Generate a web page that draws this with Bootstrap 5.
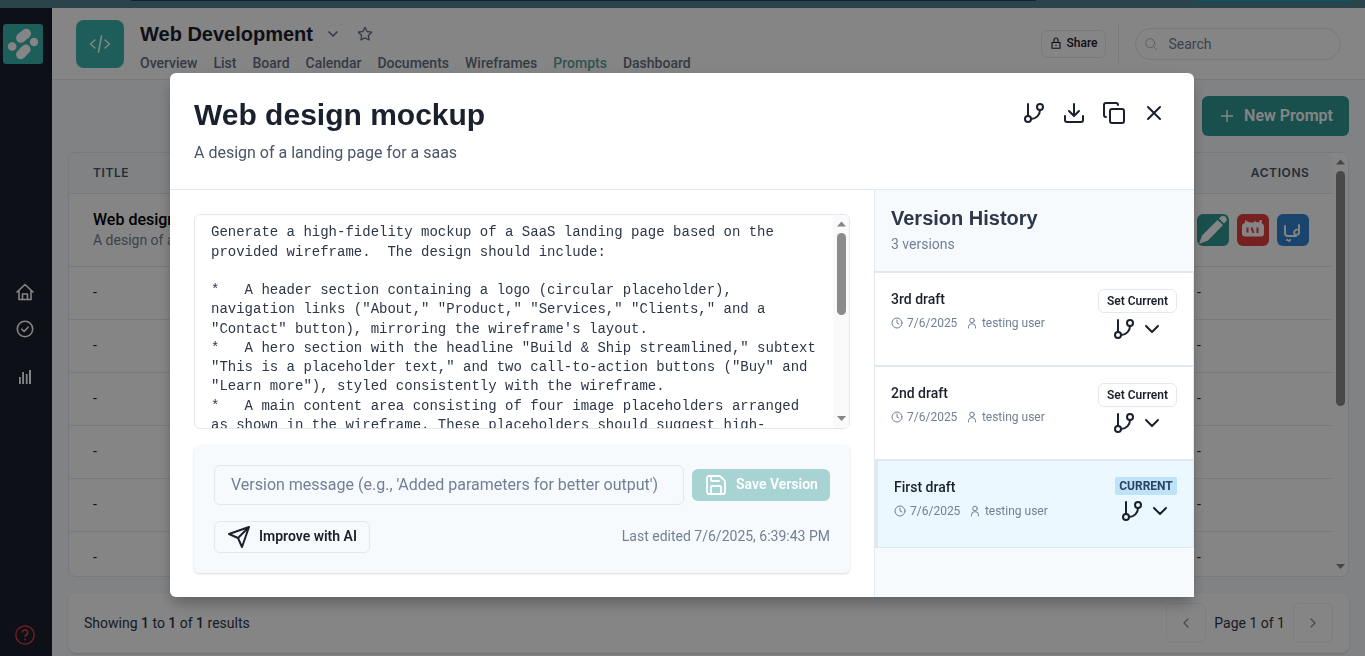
<!DOCTYPE html>
<html lang="en">
<head>
<meta charset="utf-8">
<meta name="viewport" content="width=device-width, initial-scale=1">
<title>Web Development – Prompts</title>
<link href="https://cdn.jsdelivr.net/npm/bootstrap@5.3.0/dist/css/bootstrap.min.css" rel="stylesheet">
<style>
  :root { --g50:#f7fafc; --g100:#edf2f7; --g200:#e2e8f0; --g500:#718096; --g600:#4a5568; --g700:#2d3748; --g800:#1a202c; --teal:#319795; }
  body { font-family: Roboto, sans-serif; font-size: 16px; line-height: 1.5; color: var(--g800); background: var(--g50); height: 656px; overflow: hidden; }
  h1, h2, .brand-head { font-family: "Liberation Sans", Arial, sans-serif; font-weight: 700; margin: 0; }
  svg { display: block; flex: none; }
  .ico { fill: none; stroke: currentColor; stroke-width: 2; stroke-linecap: round; stroke-linejoin: round; }
  .fw-med { font-weight: 500; }

  .top-strip { height: 8px; background: #50828f; padding-left: 131px; }
  .top-strip .seg-dark { width: 905px; height: 1px; background: #204a50; }
  .top-strip .seg-cyan { width: 152px; height: 1px; margin-left: 162px; background: #00b0c4; }
  .shell { height: 648px; }
  .side { width: 52px; background: var(--g800); color: #fff; padding-top: 16px; padding-bottom: 11px; }
  .side .logo { margin-left: 3px; }
  .side .nav-ico { margin-left: 16px; }

  .proj-head { height: 72px; background: #fff; border-bottom: 1px solid var(--g200); padding: 12px 24px; }
  .proj-tile { width: 48px; height: 48px; border-radius: 8px; background: #38b2ac; color: #fff; }
  .proj-name { font-size: 20px; line-height: 28px; color: var(--g800); }
  .tabs { gap: 16px; font-size: 14px; line-height: 21px; color: #667085; margin-top: 5px; }
  .tabs a { color: inherit; text-decoration: none; }
  .tabs a.on { color: #5c9f9a; }
  .share { width: 65px; height: 28px; border: 1px solid var(--g200); border-radius: 6px; font-size: 12px; gap: 6px; margin-top: 10px; padding: 0 0 2px 1px; }
  .head-rule { width: 1px; height: 40px; background: var(--g200); margin: 3px 16px 0 12px; }
  .search { width: 206px; height: 32px; border: 1px solid var(--g200); border-radius: 16px; color: var(--g500); font-size: 14px; padding-left: 9px; gap: 11.5px; margin-top: 8px; }
  .new-btn { width: 147px; height: 40px; border-radius: 6px; background: var(--teal); color: #fff; font-weight: 600; font-size: 16px; gap: 8px; }

  .grid-card { height: 425px; border: 1px solid var(--g200); border-radius: 8px; overflow: hidden; background: #fff; }
  .grid-row { height: 53px; border-bottom: 1px solid var(--g200); padding: 0 23px 2px 24px; font-size: 14px; }
  .grid-row.heading { height: 41px; background: var(--g50); font-size: 12px; font-family: Inter, sans-serif; font-weight: 600; letter-spacing: .6px; color: var(--g600); padding: 0 22.5px 0 24px; }
  .grid-row.first { height: 73px; padding-bottom: 0; }
  .grid-row .lead-title { font-size: 16px; font-weight: 500; color: #000; }
  .grid-row .acts { width: 112px; gap: 8px; }
  .act { width: 32px; height: 32px; border-radius: 6px; color: #fff; }
  .track { width: 16px; padding: 4px 0; background: #fff; color: #858585; }
  .track .thumb { width: 9px; border-radius: 5px; background: #8b8b8b; }
  .pager { height: 60px; background: #fff; border-radius: 8px; margin-top: 16px; padding: 0 16px; font-size: 14px; color: var(--g700); box-shadow: 0 1px 3px rgba(0,0,0,.1), 0 1px 2px rgba(0,0,0,.06); }
  .page-btn { width: 40px; height: 40px; border: 1px solid var(--g100); border-radius: 6px; color: #8a9099; }

  .shade { position: fixed; inset: 0; background: rgba(0,0,0,.48); padding: 73px 0 0 170px; }
  .sheet { width: 1024px; height: 524px; background: #fff; border-radius: 6px 6px 0 6px; overflow: hidden; }
  .shade-drop { width: 1024px; border-radius: 6px; box-shadow: 0 10px 15px -3px rgba(0,0,0,.2), 0 4px 16px -2px rgba(0,0,0,.15); }
  .sheet-head { height: 117px; border-bottom: 1px solid var(--g200); padding: 24px 28px 0 24px; }
  .sheet-head h1 { font-size: 30px; line-height: 36px; }
  .sheet-head p { font-size: 16px; line-height: 24px; margin: 8px 0 0; color: var(--g600); }
  .sheet-tools { gap: 16px; margin-top: 4px; }
  .editor { width: 704px; padding: 24px; }
  .prompt-box { width: 656px; height: 215px; border: 1px solid var(--g200); border-radius: 6px; overflow: hidden; }
  .prompt-text { font-family: "Liberation Mono", "Courier New", monospace; font-size: 14px; line-height: 19.25px; white-space: pre; color: var(--g700); padding: 8.300px 0 0 16px; margin: 0; overflow: hidden; }
  .prompt-box .track { background: #fafafa; }
  .save-panel { width: 656px; height: 128px; margin-top: 16px; padding: 20px; background: var(--g50); border-radius: 6px; box-shadow: 0 1px 3px rgba(0,0,0,.1), 0 1px 2px rgba(0,0,0,.06); }
  .msg { width: 470px; height: 40px; border: 1px solid var(--g200); border-radius: 6px; padding: 0 16px 2px; font-size: 16px; background: transparent; color: var(--g700); }
  .msg::placeholder { color: var(--g500); opacity: 1; }
  .save-btn { width: 138px; height: 32px; border-radius: 6px; background: #a8d3d3; color: #fff; font-size: 14px; font-weight: 600; gap: 8px; }
  .ai-btn { width: 156px; height: 32px; border: 1px solid var(--g200); border-radius: 6px; font-size: 14px; font-weight: 600; gap: 8px; }
  .save-btn span, .ai-btn span, .edited { padding-bottom: 2px; }
  .edited { font-size: 14px; color: var(--g500); }

  .history { width: 320px; border-left: 1px solid var(--g200); background: var(--g50); }
  .hist-head { height: 82px; border-bottom: 1px solid var(--g200); padding: 16px; }
  .hist-head h2 { font-size: 20px; line-height: 24px; color: var(--g700); }
  .hist-head p { font-size: 14px; line-height: 21px; margin: 4px 0 0; color: var(--g500); }
  .ver { height: 94px; background: #fff; border: 1px solid var(--g200); border-left: 0; padding: 16px; }
  .ver.current { height: 88px; background: #ebf8ff; border-left: 3px solid var(--g200); }
  .ver .name { font-size: 14px; line-height: 21px; font-weight: 500; }
  .ver .meta { font-size: 12px; line-height: 18px; margin-top: 4px; color: var(--g500); }
  .ver .meta .date { margin: 0 8.500px 0 4px; }
  .set-btn { width: 79px; height: 24px; border: 1px solid var(--g200); border-radius: 6px; font-size: 12px; font-weight: 600; }
  .cur-tag { width: 62px; height: 18px; border-radius: 2px; background: #bee3f8; color: #2a4365; font-size: 12px; font-weight: 700; }
</style>
</head>
<body>
<svg width="0" height="0" class="position-absolute">
  <symbol id="branch" viewBox="0 0 24 24"><path d="M6 3v12M18 9a9 9 0 0 1-9 9"/><circle cx="18" cy="6" r="3"/><circle cx="6" cy="18" r="3"/></symbol>
  <symbol id="down" viewBox="0 0 24 24"><path d="M6 9l6 6 6-6"/></symbol>
  <symbol id="clock" viewBox="0 0 24 24"><circle cx="12" cy="12" r="10"/><path d="M12 6v6l4 2"/></symbol>
  <symbol id="person" viewBox="0 0 24 24"><circle cx="12" cy="7" r="4.6"/><path d="M5 22v-2.500a6 6 0 0 1 6-6h2a6 6 0 0 1 6 6V22"/></symbol>
</svg>

<div class="top-strip d-flex"><div class="seg-dark"></div><div class="seg-cyan"></div></div>
<div class="shell d-flex">
  <nav class="side d-flex flex-column">
    <svg class="logo" width="40" height="40" viewBox="0 0 40 40"><rect width="40" height="40" rx="3" fill="#38b2ac"/><g stroke="#fff" stroke-width="9.500" stroke-linecap="round"><path d="M17.800 14l5.500-4.500M17.800 30.500l5-5.200"/></g><circle cx="9.200" cy="22.500" r="4.300" fill="#fff"/><circle cx="31" cy="18" r="4.200" fill="#fff"/></svg>
    <svg class="nav-ico ico" style="margin-top:219px;stroke-width:1.600" width="18" height="18" viewBox="0 0 18 18"><path d="M1 9l8-7.500L17 9M3 7.500V16.500h12V7.500M6.500 16.500v-5.500h5v5.500"/></svg>
    <svg class="nav-ico ico" style="margin-top:19px;stroke-width:1.600" width="18" height="18" viewBox="0 0 18 18"><circle cx="9" cy="9" r="7.700"/><path d="M5.800 9.200l2.300 2.300 4-4.300"/></svg>
    <svg class="nav-ico" style="margin-top:31px" width="18" height="16" viewBox="0 0 18 16" fill="#fff"><path d="M3 8h1.800v7H3zM6.200 3H8v12H6.200zM9.800 5h1.800v10H9.800zM13 1h2v14h-2z"/></svg>
    <svg class="mt-auto" style="margin-left:15px" width="20" height="20" viewBox="0 0 20 20" fill="none" stroke="#e53e3e" stroke-width="1.300"><circle cx="10" cy="10" r="9.200"/><path d="M7.300 7.600a2.700 2.700 0 1 1 3.900 2.400c-.9.500-1.200.9-1.200 2M10 13.700v1.600" stroke-width="1.500"/></svg>
  </nav>

  <div class="flex-grow-1">
    <header class="proj-head d-flex">
      <div class="proj-tile d-flex align-items-center justify-content-center"><svg class="ico" width="22" height="20" viewBox="0 0 22 20" style="stroke-width:1.600"><path d="M6 6L1.500 10 6 14M16 6l4.500 4-4.500 4M12.500 2l-3 16"/></svg></div>
      <div style="margin-left:16px">
        <div class="d-flex align-items-center">
          <div class="brand-head proj-name">Web Development</div>
          <svg class="ico" style="margin-left:12px;color:#667085" width="16" height="16" viewBox="0 0 24 24"><path d="M6 9l6 6 6-6" stroke-width="2.500"/></svg>
          <svg class="ico" style="margin-left:16px;color:#667085" width="16" height="16" viewBox="0 0 24 24"><path d="M12 2l3.100 6.300 6.900 1-5 4.900 1.200 6.800-6.200-3.200L5.800 21 7 14.200 2 9.300l6.900-1z"/></svg>
        </div>
        <div class="tabs d-flex fw-med"><a>Overview</a><a>List</a><a>Board</a><a>Calendar</a><a>Documents</a><a>Wireframes</a><a class="on">Prompts</a><a>Dashboard</a></div>
      </div>
      <div class="share ms-auto d-flex align-items-center justify-content-center fw-med"><svg width="10" height="12" viewBox="0 0 10 12" fill="none" stroke="currentColor" stroke-width="1.100"><path d="M1 5.500h8v5.800H1zM3 5.500V3a2 2 0 0 1 4 0v2.500M5 7.800v1.200"/></svg>Share</div>
      <div class="head-rule"></div>
      <div class="search d-flex align-items-center"><svg class="ico" width="12" height="12" viewBox="0 0 12 12" style="stroke-width:1;opacity:.55"><circle cx="5.200" cy="5.200" r="4.500"/><path d="M8.500 8.500l3 3"/></svg>Search</div>
    </header>

    <main class="px-3">
      <div class="d-flex justify-content-end pt-3"><div class="new-btn d-flex align-items-center justify-content-center"><svg width="18" height="18" viewBox="0 0 18 18" stroke="#fff" stroke-width="1.400"><path d="M9 3v12M3 9h12"/></svg>New Prompt</div></div>
      <div class="grid-card d-flex mt-3">
        <div class="flex-grow-1">
          <div class="grid-row heading d-flex align-items-center justify-content-between"><span>TITLE</span><span>ACTIONS</span></div>
          <div class="grid-row first d-flex align-items-center justify-content-between">
            <div style="line-height:21px"><div class="lead-title">Web design mockup</div><div style="color:#718096">A design of a landing page for a saas</div></div>
            <div class="acts d-flex">
              <div class="act" style="background:#319795"><svg width="32" height="32" viewBox="0 0 32 32" fill="#fff"><path d="M2 30l3-8.500L20.500 6l5.500 5L11 26.500zM22 4.500l2-2q2-1.500 4 0l1 1q1.500 2 0 4L27 9.500z"/></svg></div>
              <div class="act" style="background:#e53e3e"><svg width="32" height="32" viewBox="0 0 32 32"><path d="M5 12q0-2.500 3-3V6l2 1.200 3 1.300h4l1-2 1 1.500 3 .5 1-2.500h2l-.5 3q2.500 1 2.500 3.500v7q0 3-3 3H8q-3 0-3-3z" fill="#fff"/><path d="M10.500 13.500v5M14.500 13.500l2 5.500M20.500 13.500v5.500" stroke="#e53e3e" stroke-width="2"/></svg></div>
              <div class="act" style="background:#3182ce"><svg class="ico" width="32" height="32" viewBox="0 0 32 32" style="stroke-width:1.900"><path d="M8 12v7q0 3 3 3h8M22 11v8q0 2-4 2-3-5 4-6M10 26h.3M12 27l1-1"/></svg></div>
            </div>
          </div>
          <div class="grid-row d-flex align-items-center justify-content-between"><span>-</span><span class="acts">-</span></div>
          <div class="grid-row d-flex align-items-center justify-content-between"><span>-</span><span class="acts">-</span></div>
          <div class="grid-row d-flex align-items-center justify-content-between"><span>-</span><span class="acts">-</span></div>
          <div class="grid-row d-flex align-items-center justify-content-between"><span>-</span><span class="acts">-</span></div>
          <div class="grid-row d-flex align-items-center justify-content-between"><span>-</span><span class="acts">-</span></div>
          <div class="grid-row d-flex align-items-center justify-content-between"><span>-</span><span class="acts">-</span></div>
        </div>
        <div class="track d-flex flex-column align-items-center">
          <svg width="9" height="10" viewBox="0 0 9 10" fill="currentColor"><path d="M0 7.500h9L4.500 2.500z"/></svg>
          <div class="thumb" style="height:235px;margin-top:4px"></div>
          <svg class="mt-auto" width="9" height="10" viewBox="0 0 9 10" fill="currentColor"><path d="M0 2h9L4.500 7z"/></svg>
        </div>
      </div>
      <div class="pager d-flex align-items-center justify-content-between">
        <div>Showing <span class="fw-med">1</span> to <span class="fw-med">1</span> of <span class="fw-med">1</span> results</div>
        <div class="d-flex align-items-center">
          <div class="page-btn d-flex align-items-center justify-content-center"><svg class="ico" width="16" height="16" viewBox="0 0 24 24"><path d="M15 18l-6-6 6-6"/></svg></div>
          <div style="margin:0 8px">Page 1 of 1</div>
          <div class="page-btn d-flex align-items-center justify-content-center"><svg class="ico" width="16" height="16" viewBox="0 0 24 24"><path d="M9 18l6-6-6-6"/></svg></div>
        </div>
      </div>
    </main>
  </div>
</div>

<div class="shade">
  <div class="shade-drop">
  <section class="sheet" role="dialog">
    <div class="sheet-head d-flex justify-content-between">
      <div><h1>Web design mockup</h1><p>A design of a landing page for a saas</p></div>
      <div class="sheet-tools d-flex">
        <svg class="ico" width="24" height="24"><use href="#branch"/></svg>
        <svg class="ico" width="24" height="24" viewBox="0 0 24 24"><path d="M21 15v4a2 2 0 0 1-2 2H5a2 2 0 0 1-2-2v-4M7 10l5 5 5-5M12 15V3"/></svg>
        <svg class="ico" width="24" height="24" viewBox="0 0 24 24"><rect x="8" y="8" width="14" height="14" rx="2"/><path d="M4 16a2 2 0 0 1-2-2V4a2 2 0 0 1 2-2h10a2 2 0 0 1 2 2"/></svg>
        <svg class="ico" width="24" height="24" viewBox="0 0 24 24"><path d="M18 6L6 18M6 6l12 12"/></svg>
      </div>
    </div>
    <div class="d-flex" style="height:407px">
      <div class="editor">
        <div class="prompt-box d-flex justify-content-between">
<pre class="prompt-text">Generate a high-fidelity mockup of a SaaS landing page based on the
provided wireframe.  The design should include:

*   A header section containing a logo (circular placeholder),
navigation links ("About," "Product," "Services," "Clients," and a
"Contact" button), mirroring the wireframe's layout.
*   A hero section with the headline "Build &amp; Ship streamlined," subtext
"This is a placeholder text," and two call-to-action buttons ("Buy" and
"Learn more"), styled consistently with the wireframe.
*   A main content area consisting of four image placeholders arranged
as shown in the wireframe. These placeholders should suggest high-</pre>
          <div class="track d-flex flex-column align-items-center">
            <svg width="9" height="10" viewBox="0 0 9 10" fill="currentColor"><path d="M0 7.500h9L4.500 2.500z"/></svg>
            <div class="thumb" style="height:82px;margin-top:4px"></div>
            <svg class="mt-auto" width="9" height="10" viewBox="0 0 9 10" fill="currentColor"><path d="M0 2h9L4.500 7z"/></svg>
          </div>
        </div>
        <div class="save-panel">
          <div class="d-flex align-items-center justify-content-between">
            <input class="msg" type="text" placeholder="Version message (e.g., 'Added parameters for better output')">
            <div class="save-btn d-flex align-items-center justify-content-center"><svg class="ico" width="24" height="24" viewBox="0 0 24 24" style="stroke-width:1.800"><path d="M15.200 3a2 2 0 0 1 1.400.6l3.800 3.800a2 2 0 0 1 .6 1.400V19a2 2 0 0 1-2 2H5a2 2 0 0 1-2-2V5a2 2 0 0 1 2-2zM17 21v-7a1 1 0 0 0-1-1H8a1 1 0 0 0-1 1v7M7 3v4a1 1 0 0 0 1 1h7"/></svg><span>Save Version</span></div>
          </div>
          <div class="d-flex align-items-center justify-content-between mt-3">
            <div class="ai-btn d-flex align-items-center justify-content-center"><svg class="ico" width="24" height="24" viewBox="0 0 24 24"><path d="M22 2L15 22l-4-9-9-4zM22 2L11 13"/></svg><span>Improve with AI</span></div>
            <div class="edited">Last edited 7/6/2025, 6:39:43 PM</div>
          </div>
        </div>
      </div>
      <aside class="history">
        <div class="hist-head"><h2>Version History</h2><p>3 versions</p></div>
        <div class="ver d-flex justify-content-between">
          <div><div class="name">3rd draft</div><div class="meta d-flex align-items-center"><svg class="ico" width="12" height="12"><use href="#clock"/></svg><span class="date">7/6/2025</span><svg class="ico" width="12" height="12"><use href="#person"/></svg><span class="ms-1">testing user</span></div></div>
          <div class="d-flex flex-column align-items-center gap-1"><div class="set-btn d-flex align-items-center justify-content-center">Set Current</div><div class="d-flex gap-1"><svg class="ico" width="24" height="24"><use href="#branch"/></svg><svg class="ico" width="24" height="24"><use href="#down"/></svg></div></div>
        </div>
        <div class="ver d-flex justify-content-between">
          <div><div class="name">2nd draft</div><div class="meta d-flex align-items-center"><svg class="ico" width="12" height="12"><use href="#clock"/></svg><span class="date">7/6/2025</span><svg class="ico" width="12" height="12"><use href="#person"/></svg><span class="ms-1">testing user</span></div></div>
          <div class="d-flex flex-column align-items-center gap-1"><div class="set-btn d-flex align-items-center justify-content-center">Set Current</div><div class="d-flex gap-1"><svg class="ico" width="24" height="24"><use href="#branch"/></svg><svg class="ico" width="24" height="24"><use href="#down"/></svg></div></div>
        </div>
        <div class="ver current d-flex justify-content-between">
          <div><div class="name">First draft</div><div class="meta d-flex align-items-center"><svg class="ico" width="12" height="12"><use href="#clock"/></svg><span class="date">7/6/2025</span><svg class="ico" width="12" height="12"><use href="#person"/></svg><span class="ms-1">testing user</span></div></div>
          <div class="d-flex flex-column align-items-center gap-1"><div class="cur-tag d-flex align-items-center justify-content-center">CURRENT</div><div class="d-flex gap-1"><svg class="ico" width="24" height="24"><use href="#branch"/></svg><svg class="ico" width="24" height="24"><use href="#down"/></svg></div></div>
        </div>
      </aside>
    </div>
  </section>
  </div>
</div>
<script src="https://cdn.jsdelivr.net/npm/bootstrap@5.3.0/dist/js/bootstrap.bundle.min.js"></script>
</body>
</html>
